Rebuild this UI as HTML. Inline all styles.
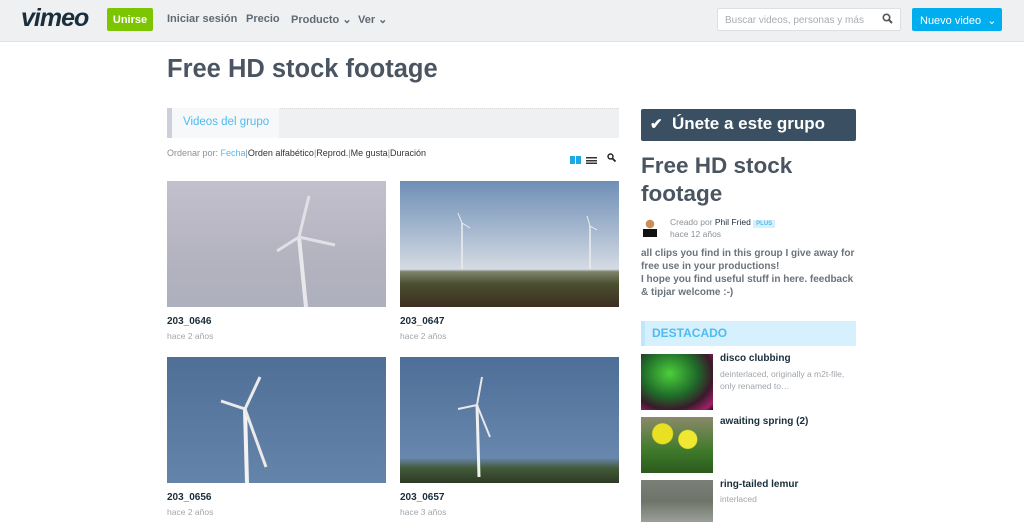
<!DOCTYPE html>
<html><head><meta charset="utf-8"><style>
*{margin:0;padding:0;box-sizing:border-box}
body{width:1024px;height:522px;overflow:hidden;background:#fff;font-family:"Liberation Sans",Arial,sans-serif;position:relative}
.a{position:absolute}
.hdr{left:0;top:0;width:1024px;height:42px;background:#eff0f2;border-bottom:1px solid #e0e2e5}
.nav{top:13px;font-size:11px;font-weight:bold;color:#606a73}
.thumb{width:219px;height:126px;overflow:hidden}
.vt{font-size:10px;font-weight:bold;color:#1a2e3b}
.vs{font-size:8.5px;color:#a0a6ab}
</style></head><body>
<div class="a hdr"></div>
<div class="a" style="left:21px;top:4px;font-family:'Liberation Sans',sans-serif;font-style:italic;font-weight:bold;font-size:25px;color:#1a2e3b;letter-spacing:-1px">vimeo</div>
<div class="a" style="left:107px;top:8px;width:46px;height:23px;background:#7bc600;border-radius:2px;color:#fff;font-size:11px;font-weight:bold;text-align:center;line-height:23px;padding-top:1px">Unirse</div>
<div class="a nav" style="left:167px">Iniciar sesión</div>
<div class="a nav" style="left:246px">Precio</div>
<div class="a nav" style="left:291px">Producto ⌄</div>
<div class="a nav" style="left:358px">Ver ⌄</div>
<div class="a" style="left:717px;top:8px;width:184px;height:23px;background:#fff;border:1px solid #dde0e3;border-radius:2px;font-size:10px;color:#a8adb2;padding:6px 0 0 7px">Buscar videos, personas y más</div>
<svg class="a" style="left:882px;top:13px" width="11" height="11" viewBox="0 0 11 11"><circle cx="4.5" cy="4.5" r="3.2" fill="none" stroke="#555" stroke-width="1.6"/><path d="M7 7l3 3" stroke="#555" stroke-width="2"/></svg>
<div class="a" style="left:912px;top:8px;width:90px;height:23px;background:#00adef;border-radius:2px;color:#fff;font-size:11px;padding:6px 0 0 8px">Nuevo video &nbsp;⌄</div>

<div class="a" style="left:167px;top:55px;font-size:25.5px;font-weight:bold;color:#4a5561">Free HD stock footage</div>

<div class="a" style="left:167px;top:108px;width:452px;height:30px;background:#eff0f2;border-top:1px dotted #d8dadd"></div>
<div class="a" style="left:167px;top:108px;width:5px;height:30px;background:#ccd0da"></div>
<div class="a" style="left:172px;top:108px;width:107px;height:30px;background:#f7f8f9;color:#4dbcf0;font-size:11.5px;padding:8px 0 0 11px">Videos del grupo</div>
<div class="a" style="left:167px;top:148px;font-size:9px;color:#8a9199">Ordenar por: <span style="color:#4dbcf0">Fecha</span>|<span style="color:#333">Orden alfabético</span>|<span style="color:#333">Reprod.</span>|<span style="color:#333">Me gusta</span>|<span style="color:#333">Duración</span></div>
<div class="a" style="left:570px;top:156px;width:11px;height:8px;background:repeating-linear-gradient(90deg,#1fa8e6 0 5px,#fff 5px 6px)"></div>
<div class="a" style="left:586px;top:156px;width:11px;height:8px;background:repeating-linear-gradient(0deg,#333 0 1.5px,#fff 1.5px 2.7px)"></div>
<svg class="a" style="left:607px;top:153px" width="9" height="9" viewBox="0 0 9 9"><circle cx="3.5" cy="3.5" r="2.5" fill="none" stroke="#222" stroke-width="1.4"/><path d="M5.5 5.5l3 3" stroke="#222" stroke-width="1.8"/></svg>

<div class="a thumb" style="left:167px;top:181px;background:linear-gradient(#c2c0cc,#b4b3c0 60%,#aeb0bd)"><svg width="219" height="126"><path d="M132 56L139 126" stroke="#e8e8ec" stroke-width="4"/><path d="M132 56L142 15M132 56L168 64M132 56L110 70" stroke="#e0e0e6" stroke-width="3"/></svg></div>
<div class="a thumb" style="left:400px;top:181px;background:linear-gradient(#6f8fb6,#a7b9cf 40%,#d5dbe3 70%,#7d836a 72%,#4a4e2f 82%,#3d2e22)"><svg width="219" height="126"><path d="M62 42V88M190 45V88" stroke="#eee" stroke-width="1.5"/><path d="M62 42l-4-10M62 42l8 5M190 45l-3-10M190 45l7 4" stroke="#eee"/></svg></div>
<div class="vt a" style="left:167px;top:316px">203_0646</div><div class="vs a" style="left:167px;top:331px">hace 2 años</div>
<div class="vt a" style="left:400px;top:316px">203_0647</div><div class="vs a" style="left:400px;top:331px">hace 2 años</div>

<div class="a thumb" style="left:167px;top:357px;background:linear-gradient(#4f6f97,#6584aa)"><svg width="219" height="126"><path d="M78 52L80 126" stroke="#f2f2f2" stroke-width="4"/><path d="M78 52L93 20M78 52L54 44M78 52L99 110" stroke="#eaeaea" stroke-width="3"/></svg></div>
<div class="a thumb" style="left:400px;top:357px;background:linear-gradient(#4d6e98,#6887ad 80%,#435b3a 88%,#2d3a24)"><svg width="219" height="126"><path d="M77 48L79 120" stroke="#f0f0f0" stroke-width="3"/><path d="M77 48L82 20M77 48L58 52M77 48L90 80" stroke="#e8e8e8" stroke-width="2"/></svg></div>
<div class="vt a" style="left:167px;top:492px">203_0656</div><div class="vs a" style="left:167px;top:507px">hace 2 años</div>
<div class="vt a" style="left:400px;top:492px">203_0657</div><div class="vs a" style="left:400px;top:507px">hace 3 años</div>

<div class="a" style="left:641px;top:109px;width:215px;height:32px;background:#3a4f61;border-radius:2px;color:#fff;font-size:17px;font-weight:bold;padding:5px 0 0 9px"><span style="font-size:15px">✔</span>&nbsp; Únete a este grupo</div>
<div class="a" style="left:641px;top:152px;font-size:22.5px;font-weight:bold;color:#4a5561;line-height:28px">Free HD stock<br>footage</div>
<div class="a" style="left:643px;top:217px;width:14px;height:20px;background:radial-gradient(circle at 50% 35%,#c88f5a 0 4px,transparent 4.5px),linear-gradient(transparent 60%,#111 60%)"></div>
<div class="a" style="left:670px;top:217px;font-size:8.5px;color:#8a9199">Creado por <span style="color:#1a2e3b">Phil Fried</span> <span style="background:#d6f0fd;color:#4dbcf0;font-size:6px;font-weight:bold;padding:1px 3px">PLUS</span></div>
<div class="a" style="left:670px;top:229px;font-size:8.5px;color:#8a9199">hace 12 años</div>
<div class="a" style="left:641px;top:247px;font-size:10px;font-weight:bold;color:#6b737b;line-height:13px">all clips you find in this group I give away for<br>free use in your productions!<br>I hope you find useful stuff in here. feedback<br>&amp; tipjar welcome :-)</div>

<div class="a" style="left:641px;top:321px;width:215px;height:25px;background:#d6f0fd;border-left:4px solid #bfe7fb;color:#4dbcf0;font-size:12px;font-weight:bold;padding:5px 0 0 7px">DESTACADO</div>
<div class="a" style="left:641px;top:354px;width:72px;height:56px;background:radial-gradient(ellipse at 40% 35%,#4ccf3a,#1f6a2a 45%,#3a1a2a 70%,#a0206a 90%,#1a0a10)"></div>
<div class="a vt" style="left:720px;top:353px">disco clubbing</div>
<div class="a vs" style="left:720px;top:368px;line-height:12px">deinterlaced, originally a m2t-file,<br>only renamed to…</div>
<div class="a" style="left:641px;top:417px;width:72px;height:56px;background:radial-gradient(circle at 30% 30%,#e8e020 0 10px,transparent 11px),radial-gradient(circle at 65% 40%,#f0e830 0 9px,transparent 10px),linear-gradient(#8a8a6a,#3f7a2a 60%,#2b5a1e)"></div>
<div class="a vt" style="left:720px;top:416px">awaiting spring (2)</div>
<div class="a" style="left:641px;top:480px;width:72px;height:42px;background:linear-gradient(#7a8078,#6e7468 50%,#9aa098)"></div>
<div class="a vt" style="left:720px;top:479px">ring-tailed lemur</div>
<div class="a vs" style="left:720px;top:494px">interlaced</div>
</body></html>
